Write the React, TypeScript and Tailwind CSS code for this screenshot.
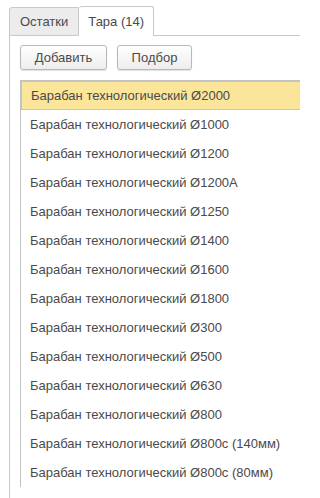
import { useState } from "react";

const items = [
  "Барабан технологический Ø2000",
  "Барабан технологический Ø1000",
  "Барабан технологический Ø1200",
  "Барабан технологический Ø1200А",
  "Барабан технологический Ø1250",
  "Барабан технологический Ø1400",
  "Барабан технологический Ø1600",
  "Барабан технологический Ø1800",
  "Барабан технологический Ø300",
  "Барабан технологический Ø500",
  "Барабан технологический Ø630",
  "Барабан технологический Ø800",
  "Барабан технологический Ø800с (140мм)",
  "Барабан технологический Ø800с (80мм)",
];

export default function App() {
  const [selected, setSelected] = useState(0);

  return (
    <div className="h-[498px] w-[300px] overflow-hidden bg-white font-['Liberation_Sans',Arial,sans-serif] text-[13px] text-[#4a4a4a]">
      {/* tabs */}
      <div className="flex items-end pl-[9px] pt-[6px]">
        <button className="flex h-[29px] items-center rounded-tl-[3px] border border-[#c8c8c8] bg-[#ececec] px-[10px]">
          Остатки
        </button>
        <button className="flex h-[30px] items-center rounded-t-[3px] border-r border-t border-[#c8c8c8] bg-white px-[9px]">
          Тара (14)
        </button>
        <div className="flex-1 border-b border-[#c8c8c8]" />
      </div>

      <div className="ml-[9px] flex h-full flex-col border-l border-[#c8c8c8] pl-[10px]">
        <div className="mt-[9px] flex gap-[10px]">
          <Btn w="w-[87px]">Добавить</Btn>
          <Btn w="w-[75px]">Подбор</Btn>
        </div>

        <div className="mt-[10px] border-l border-t border-[#c2c2c2]">
          {items.map((name, i) => (
            <div
              key={name}
              onClick={() => setSelected(i)}
              className={`flex h-[29px] items-center whitespace-nowrap pl-[9px] ${
                selected === i
                  ? "border-y border-l border-y-[#eac75e] border-l-[#eac75e] border-b-[#f5c945] bg-[#fbe59b] pl-[8px]"
                  : ""
              }`}
            >
              {name}
            </div>
          ))}
        </div>
      </div>
    </div>
  );
}

function Btn({ w, children }: { w: string; children: React.ReactNode }) {
  return (
    <button
      className={`${w} h-[25px] rounded-[3px] border border-[#b8b8b8] bg-gradient-to-b from-white to-[#ededed] text-[13px] text-[#4a4a4a] shadow-[0_1px_1px_rgba(0,0,0,0.12)]`}
    >
      {children}
    </button>
  );
}
